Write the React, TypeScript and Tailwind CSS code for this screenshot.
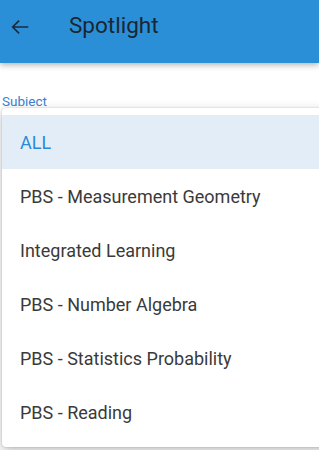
import React from "react";

const items = [
  "ALL",
  "PBS - Measurement Geometry",
  "Integrated Learning",
  "PBS - Number Algebra",
  "PBS - Statistics Probability",
  "PBS - Reading",
];

const App = () => {
  return (
    <div className="h-[450px] w-[319px] overflow-hidden bg-white font-['Roboto',sans-serif]">
      <header className="relative z-10 flex h-[63px] items-start bg-[#2a8fd6] shadow-[0_2px_6px_rgba(0,0,0,0.3)]">
        <button className="ml-[8px] mt-[15px] flex h-[24px] w-[24px] items-center justify-center text-[#1d2b3a]">
          <svg width="22" height="22" viewBox="0 0 24 24" fill="none" stroke="currentColor" strokeWidth="1.8">
            <path d="M21 12H4M11 5l-7 7 7 7" />
          </svg>
        </button>
        <h1 className="ml-[37px] mt-[12px] text-[22.5px] leading-[27px] text-[#1b2633]">Spotlight</h1>
      </header>

      <div className="pt-[31px]">
        <label className="block pl-[2px] text-[13.5px] leading-[14px] text-[#3c7fd4]">Subiect</label>
        <ul className="relative z-20 ml-[2px] w-[340px] rounded-[4px] bg-white pb-[8px] pt-[7px] shadow-[0_4px_12px_rgba(0,0,0,0.25),0_0_2px_rgba(0,0,0,0.2)]">
          {items.map((item, i) => (
            <li
              key={item}
              className={
                i === 0
                  ? "flex h-[54px] items-center bg-[#e3edf7] pl-[18px] text-[18px] text-[#2a8ad8]"
                  : "flex h-[54px] items-center pl-[18px] text-[18px] text-[#3a3a3a]"
              }
            >
              {item}
            </li>
          ))}
        </ul>
      </div>
    </div>
  );
};

export default App;
